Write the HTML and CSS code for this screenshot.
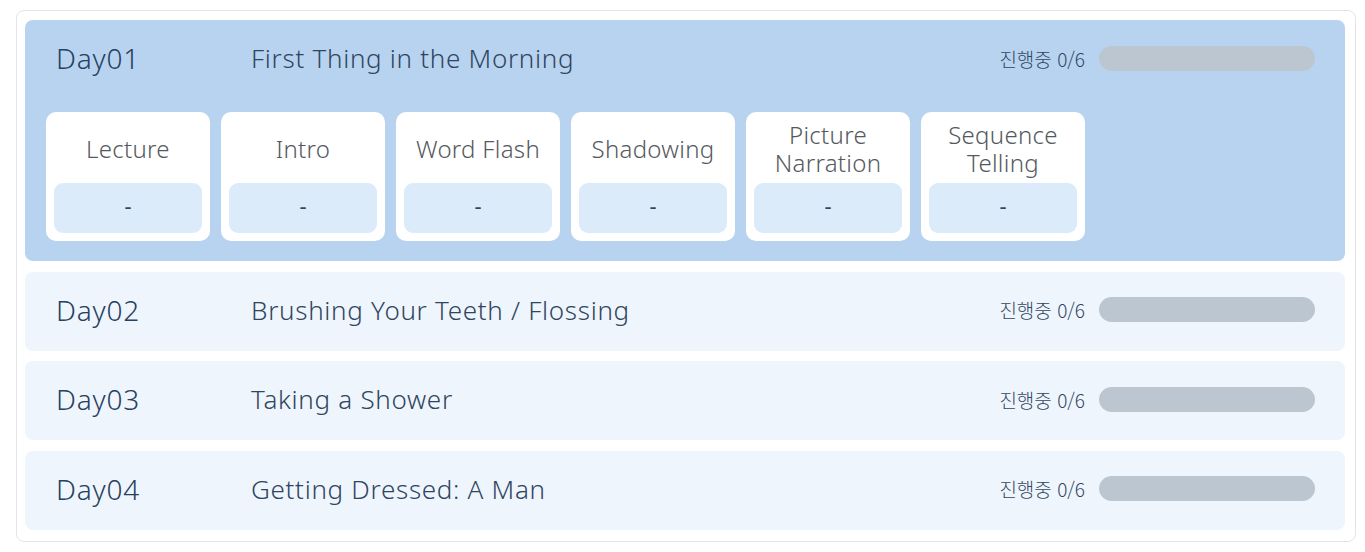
FILE: index.html
```html
<!DOCTYPE html>
<html lang="ko">
<head>
<meta charset="utf-8">
<link rel="stylesheet" href="styles.css">
</head>
<body>
<div class="panel">
  <section class="day open">
    <div class="head">
      <span class="day-no">Day01</span>
      <span class="title">First Thing in the Morning</span>
      <span class="status">진행중 0/6</span>
      <span class="bar"></span>
    </div>
    <div class="cards">
      <div class="card"><div class="label">Lecture</div><div class="score">-</div></div>
      <div class="card"><div class="label">Intro</div><div class="score">-</div></div>
      <div class="card"><div class="label">Word Flash</div><div class="score">-</div></div>
      <div class="card"><div class="label">Shadowing</div><div class="score">-</div></div>
      <div class="card"><div class="label"><span>Picture</span><span>Narration</span></div><div class="score">-</div></div>
      <div class="card"><div class="label"><span>Sequence</span><span>Telling</span></div><div class="score">-</div></div>
    </div>
  </section>
  <section class="day">
    <div class="head">
      <span class="day-no">Day02</span>
      <span class="title">Brushing Your Teeth / Flossing</span>
      <span class="status">진행중 0/6</span>
      <span class="bar"></span>
    </div>
  </section>
  <section class="day">
    <div class="head">
      <span class="day-no">Day03</span>
      <span class="title">Taking a Shower</span>
      <span class="status">진행중 0/6</span>
      <span class="bar"></span>
    </div>
  </section>
  <section class="day">
    <div class="head">
      <span class="day-no">Day04</span>
      <span class="title">Getting Dressed: A Man</span>
      <span class="status">진행중 0/6</span>
      <span class="bar"></span>
    </div>
  </section>
</div>
</body>
</html>
```
FILE: styles.css
```css
html, body {
  margin: 0;
  padding: 0;
  background: #ffffff;
}
body {
  font-family: "Noto Sans", "Noto Sans CJK KR", sans-serif;
}
.panel {
  margin: 10px 0 0 16px;
  width: 1340px;
  box-sizing: border-box;
  border: 1px solid #e2e4e7;
  border-radius: 8px;
  padding: 9px 10px 11px 8px;
  display: flex;
  flex-direction: column;
  gap: 10.5px;
}
.day {
  background: #eff5fc;
  border-radius: 8px;
}
.day.open {
  background: #b8d3f0;
  padding-bottom: 20px;
}
.head {
  height: 79px;
  box-sizing: border-box;
  padding: 0 30px 3px 31px;
  display: flex;
  align-items: center;
}
.day-no {
  width: 195px;
  font-size: 28px;
  color: #27405f;
  font-weight: 300;
  letter-spacing: 0.8px;
}
.title {
  flex: 1;
  font-size: 26px;
  color: #2f4661;
  letter-spacing: 0.7px;
  font-weight: 300;
}
.status {
  font-family: "Noto Sans CJK KR", "Noto Sans", sans-serif;
  font-size: 19px;
  font-weight: 300;
  color: #2f4661;
  margin-right: 14px;
}
.bar {
  width: 216px;
  height: 25px;
  border-radius: 13px;
  background: #bcc6d1;
}
.cards {
  display: flex;
  gap: 11px;
  padding: 13px 0 0 21px;
}
.card {
  width: 164px;
  height: 129px;
  box-sizing: border-box;
  background: #ffffff;
  border-radius: 10px;
  padding: 0 8px 8px;
  display: flex;
  flex-direction: column;
}
.label {
  height: 71px;
  padding-top: 2px;
  box-sizing: border-box;
  display: flex;
  flex-direction: column;
  align-items: center;
  justify-content: center;
  text-align: center;
  font-size: 24px;
  line-height: 28px;
  font-weight: 300;
  letter-spacing: 0.3px;
  color: #55595e;
}
.label span {
  display: block;
  height: 28px;
}
.score {
  flex: 1;
  background: #dcebfa;
  border-radius: 9px;
  padding-bottom: 6px;
  box-sizing: border-box;
  display: flex;
  align-items: center;
  justify-content: center;
  font-size: 22px;
  color: #2f4661;
}
```
